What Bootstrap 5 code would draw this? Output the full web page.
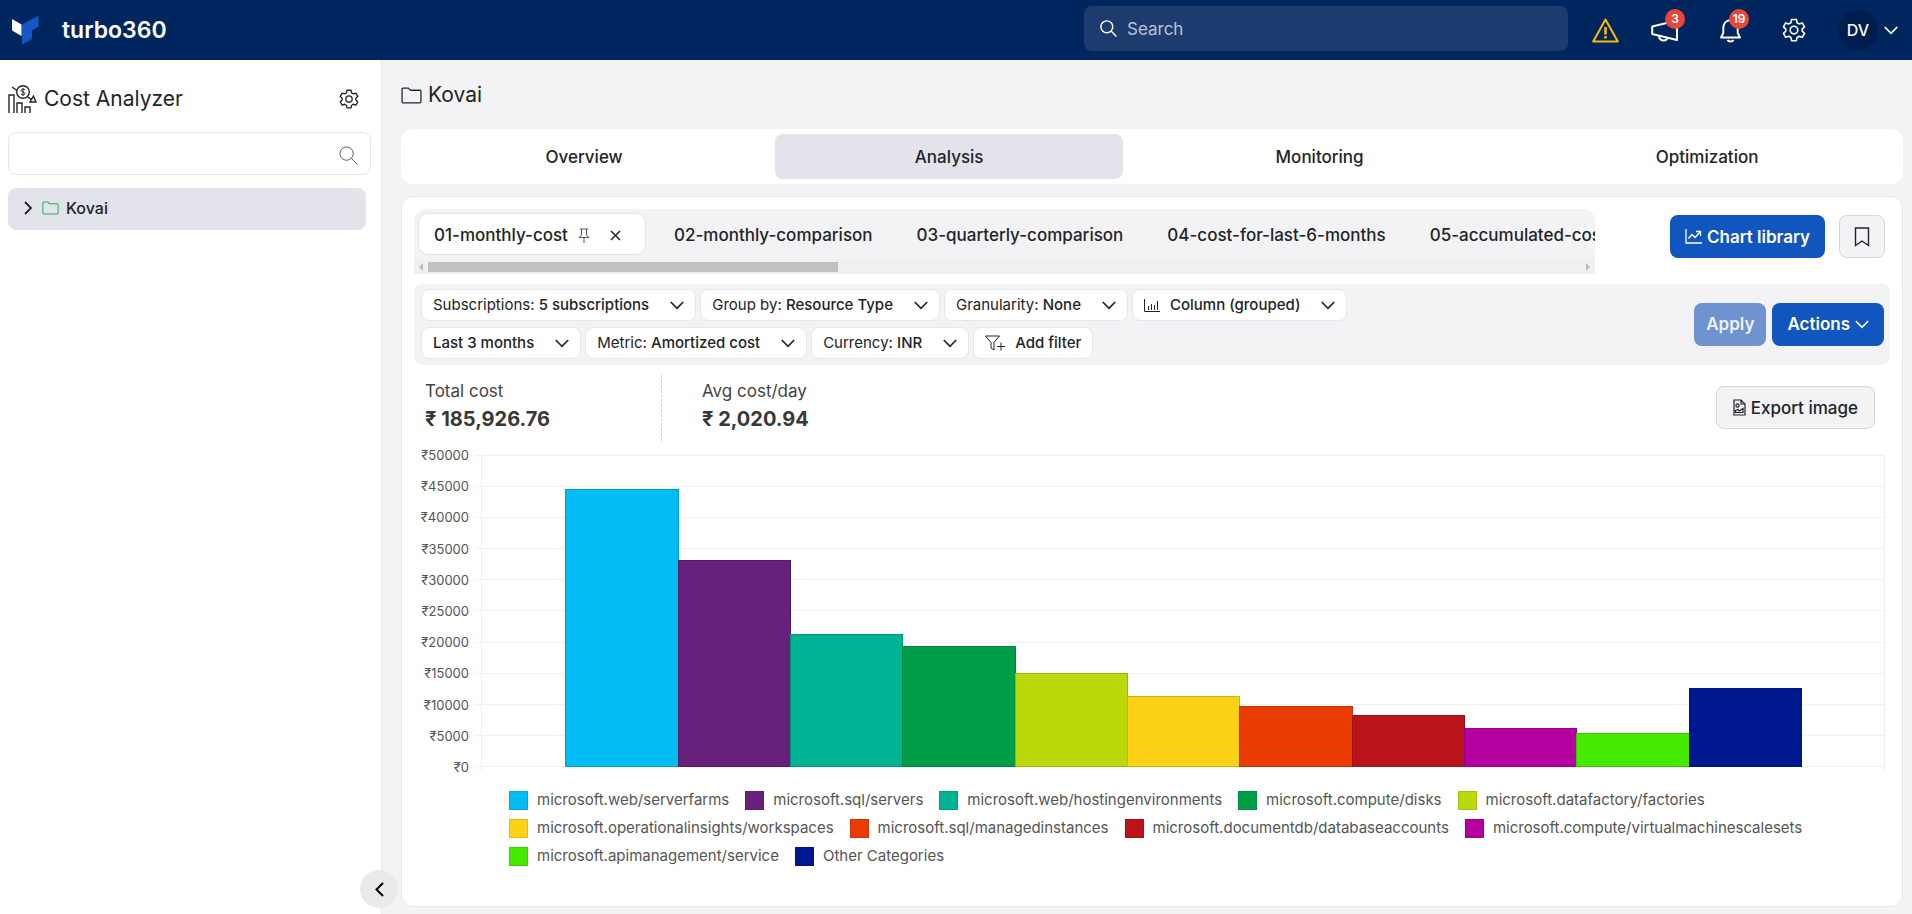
<!DOCTYPE html>
<html lang="en">
<head>
<meta charset="utf-8">
<meta name="viewport" content="width=device-width, initial-scale=1">
<title>Cost Analyzer - turbo360</title>
<link href="https://cdn.jsdelivr.net/npm/bootstrap@5.3.0/dist/css/bootstrap.min.css" rel="stylesheet">
<style>
:root { --navy: #00265f; --blue: #1155bf; --soft: #f3f3f6; --pill: #e3e3eb; --line: #e6e6ec; --ink: #222428; }
body { font-family: Inter, "Liberation Sans", sans-serif; font-size: 17px; line-height: 24px; color: var(--ink); background: var(--soft); }
svg { display: block; flex: none; fill: none; stroke: currentColor; }
ul { list-style: none; margin: 0; padding: 0; }

.topbar { height: 60px; background: var(--navy); color: #fff; padding: 0 14px 0 11px; }
.brand { font-size: 23px; font-weight: 600; color: #fff; gap: 22px; }
.brand svg { stroke: none; }
.global-search { width: 484px; height: 45px; background: #1c3c70; border-radius: 8px; padding: 0 16px; gap: 8px; margin: 0 24px 3px 0; }
.global-search input, .tree-search input { background: none; border: 0; outline: 0; min-width: 0; color: inherit; }
.global-search input::placeholder { color: #bcc4d1; opacity: 1; }
.tools { gap: 32px; }
.icon-btn { background: none; border: 0; padding: 0; color: inherit; position: relative; }
.warn-btn { color: #fcb900; }
.count { position: absolute; top: -8px; height: 20px; min-width: 20px; border-radius: 10px; background: #e8463a; color: #fff; font-size: 12px; font-weight: 600; line-height: 20px; text-align: center; }
.account { gap: 6px; }
.avatar { width: 40px; height: 40px; border-radius: 50%; background: #001d50; font-weight: 500; display: grid; place-items: center; font-size: 16px; }

.side { width: 382px; background: #fff; border-right: 1px solid var(--line); padding: 24px 10px 0 8px; position: relative; flex: none; }
.side-head { gap: 6px; padding-right: 12px; }
.side h1 { font-size: 21px; font-weight: 400; margin: 0; }
.tree-search { height: 43px; border: 1px solid var(--line); border-radius: 8px; padding: 4px 12px 0; margin-top: 18px; color: #555; }
.tree-item { height: 42px; background: var(--pill); border-radius: 8px; margin: 13px 5px 0 0; padding: 0 0 2px 16px; gap: 7px; color: var(--ink); text-decoration: none; font-size: 16px; font-weight: 500; }
.tree-folder { color: #27b060; margin-left: 3px; }
.collapse-btn { position: absolute; right: -17px; bottom: 6px; width: 38px; height: 38px; border-radius: 50%; background: #eaeaea; border: 0; display: grid; place-items: center; }

.content { padding: 21px 9px 7px 19px; min-width: 0; }
.crumb { font-size: 21px; line-height: 28px; gap: 6px; }
.main-tabs { background: #fff; border-radius: 12px; padding: 5px; gap: 13px; margin-top: 20px; }
.main-tabs a { flex: 1 1 auto; height: 45px; line-height: 47px; text-align: center; color: var(--ink); text-decoration: none; font-weight: 500; border-radius: 8px; }
.main-tabs a.active { background: var(--pill); }
.panel { background: #fff; border: 1px solid var(--line); border-radius: 12px; margin-top: 12px; padding: 12px 12px 0; }

.strip { background: var(--soft); border-radius: 12px 12px 0 0; flex: 0 1 1181px; min-width: 0; overflow: hidden; }
.strip-tabs { padding: 4px 4px 5px; white-space: nowrap; }
.strip-tabs a { color: var(--ink); text-decoration: none; font-weight: 500; height: 42px; padding: 2px 22px 0; }
.strip-tabs .on { background: #fff; border: 1px solid var(--pill); border-radius: 10px; height: 42px; width: 228px; padding: 2px 0 0 15px; margin-right: 6px; font-weight: 500; flex: none; }
.pin { color: #555; margin-left: 10px; margin-right: 20px; }
.scroller { height: 14px; background: #f0f0f0; gap: 5px; padding: 0 5px; }
.scroller .thumb { height: 10px; width: 35%; background: #c1c1c1; }
.scroller svg { fill: #bcbcbc; stroke: none; }

.act { height: 43px; border-radius: 8px; border: 1px solid transparent; display: flex; align-items: center; justify-content: center; gap: 5px; font-size: 17px; padding: 0 14px; }
.act-primary { background: var(--blue); color: #fff; font-weight: 600; }
.act-primary:disabled { background: #6f93cf; color: #edf2fa; opacity: 1; border-color: transparent; padding: 0 11px; }
.act-plain { background: var(--soft); border-color: #d6d6d8; color: var(--ink); font-weight: 500; }
.panel-actions { gap: 14px; padding: 6px 5px 0 0; }
.filter-actions { gap: 6px; }

.filters { background: var(--soft); border-radius: 8px; margin-top: 10px; padding: 5px 6px 6px 7px; }
.chips { gap: 6px 4px; max-width: 940px; }
.chip { height: 32px; background: #fff; border: 1px solid var(--line); border-radius: 8px; color: var(--ink); font-size: 15px; padding: 0 11px; display: flex; align-items: center; gap: 21px; white-space: nowrap; }
.chip b { font-weight: 500; }
.chip-lead { gap: 10px; }

.stats { padding: 10px 15px 0 11px; }
.stat-label { font-size: 17px; color: #444; line-height: 24px; }
.stat-value { font-size: 20px; font-weight: 700; color: #383838; line-height: 32px; }
.stat-first { width: 237px; height: 66px; border-right: 1px dashed #cfcfcf; }
.export { margin-top: 11px; padding: 0 16px; }

.chart { display: grid; grid-template-columns: 48px 6px 6px 1fr; margin: 14px 5px 0 7px; height: 317px; }
.y-labels { height: 312px; font-size: 13px; color: #555; }
.y-labels li { height: 0; display: flex; align-items: center; justify-content: flex-end; }
.grid-rows { grid-column: 3 / 5; grid-row: 1; height: 312px; border-bottom: 1px solid #f1f1f1; }
.grid-rows div { flex: 1; border-top: 1px solid #f1f1f1; }
.frame { grid-column: 4; grid-row: 1; border: solid #f1f1f1; border-width: 0 1px; }
.bars { grid-column: 4; grid-row: 1; height: 312px; padding: 0 6%; }
.bars div { flex: 1; border: 1px solid rgba(0,0,0,.16); margin-right: -1px; }

.legend-rows { margin: 18px 0 0 95px; font-size: 15px; line-height: 20px; color: #555; }
.legend-rows ul { gap: 0 16px; margin-bottom: 8px; }
.legend-rows li { display: flex; align-items: center; gap: 9px; white-space: nowrap; }
.swatch { width: 19px; height: 19px; border: 1px solid rgba(0,0,0,.1); }

.c1 { background: #03bcf4; } .c2 { background: #68217a; } .c3 { background: #00b294; } .c4 { background: #009e49; }
.c5 { background: #bad80a; } .c6 { background: #fdd116; } .c7 { background: #eb3c00; } .c8 { background: #ba141a; }
.c9 { background: #b4009e; } .c10 { background: #46ea00; } .c11 { background: #00188f; }
</style>
</head>
<body class="d-flex flex-column min-vh-100">

<svg width="0" height="0" class="position-absolute">
  <symbol id="gear" viewBox="0 0 24 24"><path stroke-width="1.6" stroke-linejoin="round" d="M9.600 1.500h4.800l.7 3.200 2 1.200 3.200-1 2.200 4-2.300 2.200v2l2.300 2.200-2.200 4-3.200-1-2 1.200-.7 3.200H9.600l-.7-3.200-2-1.200-3.200 1-2.200-4 2.300-2.200v-2L1.500 8.900l2.200-4 3.200 1 2-1.200z"/><circle cx="12" cy="12.100" r="3.800" stroke-width="1.600"/></symbol>
  <symbol id="down" viewBox="0 0 14 9"><path stroke-width="1.7" d="M.8 1 7 7.400 13.200 1"/></symbol>
  <symbol id="lens" viewBox="0 0 20 20"><circle cx="8" cy="8" r="7"/><path d="m13 13 6.300 6.300"/></symbol>
  <symbol id="folder" viewBox="0 0 20 16"><path stroke-width="1.200" d="M1 14V2q0-1 1-1h5l2 2h9q1 0 1 1v10q0 1-1 1H2q-1 0-1-1z"/></symbol>
</svg>

<header class="topbar d-flex align-items-center">
  <a href="#" class="brand d-flex align-items-center text-decoration-none me-auto">
    <svg width="29" height="30" viewBox="0 0 29 30"><path fill="#fff" d="M1 4 10.500 9.500v11.500L1 15.500z"/><path fill="#1557c4" d="M11 9.500 27.500.500v11L21 15.500V24L11 29.500z"/></svg>
    turbo360
  </a>
  <label class="global-search d-flex align-items-center">
    <svg width="17" height="17" stroke-width="1.700"><use href="#lens"/></svg>
    <input type="search" class="flex-grow-1" placeholder="Search" aria-label="Search">
  </label>
  <div class="tools d-flex align-items-center">
    <button type="button" class="icon-btn warn-btn" aria-label="Warnings">
      <svg width="27" height="25" viewBox="0 0 27 25"><path stroke-width="2" stroke-linejoin="round" d="M13.500 1.500 25.800 23.500H1.200z"/><path stroke-width="2.600" d="M13.500 9v7.500M13.500 18v2.500"/></svg>
    </button>
    <button type="button" class="icon-btn" aria-label="Announcements">
      <svg width="28" height="26" viewBox="0 0 28 26" stroke-width="2"><path d="M1.200 9.500v7.500L26 23V3.500z" stroke-linejoin="round"/><path d="M8 18.500c0 6 7.500 6.500 8.500 2"/></svg>
      <span class="count" style="left:14px">3</span>
    </button>
    <button type="button" class="icon-btn ms-2" aria-label="Notifications">
      <svg width="23" height="26" viewBox="0 0 23 26" stroke-width="1.900"><path stroke-linejoin="round" d="M2 20.500h19l-2.300-4.500V11c0-4-2.500-7.500-7.200-8-4.700.500-7.200 4-7.200 8v5z"/><path d="M8.500 23c1 2 5 2 6 0"/></svg>
      <span class="count" style="left:10px">19</span>
    </button>
    <button type="button" class="icon-btn ms-2" aria-label="Settings"><svg width="24" height="24"><use href="#gear"/></svg></button>
    <button type="button" class="icon-btn account d-flex align-items-center"><span class="avatar">DV</span><svg width="14" height="9"><use href="#down"/></svg></button>
  </div>
</header>

<div class="d-flex flex-grow-1">
  <aside class="side">
    <div class="side-head d-flex align-items-center">
      <svg width="30" height="30" viewBox="0 0 30 30" stroke-width="1.400"><path d="M1 29V11h5v18M9 29V19h5v10M17 29v-6h5v6M4 3l5 3.500M20 13l4 3M22 18h6l-2.500-6z"/><circle cx="15" cy="8" r="6.300"/><path d="M17 6c-1-1.300-4-1-4 .500s4 1.300 4 3-3 1.800-4 .400M15 4v8" stroke-width="1"/></svg>
      <h1 class="me-auto">Cost Analyzer</h1>
      <button type="button" class="icon-btn" aria-label="Cost Analyzer settings"><svg width="20" height="20"><use href="#gear"/></svg></button>
    </div>
    <label class="tree-search d-flex align-items-center">
      <input type="search" class="flex-grow-1" aria-label="Search cost groups">
      <svg width="19" height="19"><use href="#lens"/></svg>
    </label>
    <a href="#" class="tree-item d-flex align-items-center">
      <svg width="8" height="14" viewBox="0 0 8 14" stroke-width="1.800"><path d="m1 1 6 6-6 6"/></svg>
      <svg width="17" height="14" class="tree-folder"><use href="#folder"/></svg>
      Kovai
    </a>
    <button type="button" class="collapse-btn" aria-label="Collapse sidebar"><svg width="9" height="15" viewBox="0 0 9 15" stroke-width="2"><path d="M8 1 1.500 7.500 8 14"/></svg></button>
  </aside>

  <main class="content flex-grow-1 d-flex flex-column">
    <div class="crumb d-flex align-items-center">
      <svg width="21" height="17"><use href="#folder"/></svg>Kovai
    </div>

    <nav class="main-tabs d-flex">
      <a href="#">Overview</a><a href="#" class="active">Analysis</a><a href="#">Monitoring</a><a href="#">Optimization</a>
    </nav>

    <section class="panel flex-grow-1">
      <div class="d-flex align-items-start">
        <div class="strip me-auto">
          <div class="strip-tabs d-flex align-items-center">
            <div class="on d-flex align-items-center">
              01-monthly-cost
              <svg width="12" height="15" viewBox="0 0 12 15" class="pin"><path d="M2 1h8M3.500 1v6L1 9.500h10L8.500 7V1M6 9.500V15"/></svg>
              <button type="button" class="icon-btn" aria-label="Close tab"><svg width="11" height="11" viewBox="0 0 11 11" stroke-width="1.500"><path d="m1 1 9 9M10 1l-9 9"/></svg></button>
            </div>
            <a href="#" class="d-flex align-items-center">02-monthly-comparison</a>
            <a href="#" class="d-flex align-items-center">03-quarterly-comparison</a>
            <a href="#" class="d-flex align-items-center">04-cost-for-last-6-months</a>
            <a href="#" class="d-flex align-items-center">05-accumulated-costs</a>
          </div>
          <div class="scroller d-flex align-items-center">
            <svg width="4" height="8" viewBox="0 0 4 8"><path d="M4 0v8L0 4z"/></svg>
            <span class="thumb"></span>
            <svg width="4" height="8" viewBox="0 0 4 8" class="ms-auto"><path d="M0 0v8l4-4z"/></svg>
          </div>
        </div>
        <div class="panel-actions d-flex">
          <button type="button" class="act act-primary text-nowrap">
            <svg width="17" height="15" viewBox="0 0 17 15" stroke-width="1.300"><path d="M1 0v14h16M3.500 9.500 7 5.500l3 3L15 3M11 2.500h4.500V7"/></svg>Chart library
          </button>
          <button type="button" class="act act-plain" aria-label="Bookmark">
            <svg width="16" height="20" viewBox="0 0 16 20" stroke-width="1.400"><path d="M1.500 1h13v17.500L8 14l-6.500 4.500z"/></svg>
          </button>
        </div>
      </div>

      <div class="filters d-flex align-items-center">
        <div class="chips d-flex flex-wrap me-auto">
          <button type="button" class="chip"><span>Subscriptions: <b>5 subscriptions</b></span><svg width="14" height="9"><use href="#down"/></svg></button>
          <button type="button" class="chip"><span>Group by: <b>Resource Type</b></span><svg width="14" height="9"><use href="#down"/></svg></button>
          <button type="button" class="chip"><span>Granularity: <b>None</b></span><svg width="14" height="9"><use href="#down"/></svg></button>
          <button type="button" class="chip"><span class="chip-lead d-flex align-items-center"><svg width="16" height="13" viewBox="0 0 16 13"><path d="M.5 0v12.500H16M4.500 11V7M7.500 11V5M10.500 11V6M13.500 11V2"/></svg><b>Column (grouped)</b></span><svg width="14" height="9"><use href="#down"/></svg></button>
          <button type="button" class="chip"><b>Last 3 months</b><svg width="14" height="9"><use href="#down"/></svg></button>
          <button type="button" class="chip"><span>Metric: <b>Amortized cost</b></span><svg width="14" height="9"><use href="#down"/></svg></button>
          <button type="button" class="chip"><span>Currency: <b>INR</b></span><svg width="14" height="9"><use href="#down"/></svg></button>
          <button type="button" class="chip"><span class="chip-lead d-flex align-items-center"><svg width="20" height="16" viewBox="0 0 20 16"><path d="M.5 1h14L9 7.500V15l-3-2V7.500zM12 11.500h8M16 7.500v8"/></svg><b>Add filter</b></span></button>
        </div>
        <div class="filter-actions d-flex">
          <button type="button" class="act act-primary" disabled>Apply</button>
          <button type="button" class="act act-primary">Actions <svg width="14" height="9"><use href="#down"/></svg></button>
        </div>
      </div>

      <div class="stats d-flex align-items-start">
        <div class="stat-first">
          <div class="stat-label mt-1">Total cost</div>
          <div class="stat-value">₹ 185,926.76</div>
        </div>
        <div class="ms-4 ps-3 me-auto">
          <div class="stat-label mt-1">Avg cost/day</div>
          <div class="stat-value">₹ 2,020.94</div>
        </div>
        <button type="button" class="act act-plain export">
          <svg width="13" height="17" viewBox="0 0 13 17" stroke-width="1.200"><path d="M1 1h7l4 4v11H1zM8 1v4h4M2.500 13.500v-2l2.500-1 1.500 1.500 3.500-2.500v4z"/><circle cx="4.500" cy="6.500" r="1.600"/></svg>Export image
        </button>
      </div>

      <div class="chart" role="img" aria-label="Cost by resource type over the last 3 months">
        <ul class="y-labels d-flex flex-column justify-content-between">
          <li>₹50000</li><li>₹45000</li><li>₹40000</li><li>₹35000</li><li>₹30000</li><li>₹25000</li><li>₹20000</li><li>₹15000</li><li>₹10000</li><li>₹5000</li><li>₹0</li>
        </ul>
        <div class="grid-rows d-flex flex-column"><div></div><div></div><div></div><div></div><div></div><div></div><div></div><div></div><div></div><div></div></div>
        <div class="frame"></div>
        <div class="bars d-flex align-items-end">
          <div class="c1" style="height:89.2%"></div>
          <div class="c2" style="height:66.3%"></div>
          <div class="c3" style="height:42.5%"></div>
          <div class="c4" style="height:38.9%"></div>
          <div class="c5" style="height:30%"></div>
          <div class="c6" style="height:22.7%"></div>
          <div class="c7" style="height:19.5%"></div>
          <div class="c8" style="height:16.8%"></div>
          <div class="c9" style="height:12.4%"></div>
          <div class="c10" style="height:10.8%"></div>
          <div class="c11" style="height:25.3%"></div>
        </div>
      </div>

      <div class="legend-rows">
        <ul class="d-flex flex-wrap">
          <li><span class="swatch c1"></span>microsoft.web/serverfarms</li>
          <li><span class="swatch c2"></span>microsoft.sql/servers</li>
          <li><span class="swatch c3"></span>microsoft.web/hostingenvironments</li>
          <li><span class="swatch c4"></span>microsoft.compute/disks</li>
          <li><span class="swatch c5"></span>microsoft.datafactory/factories</li>
        </ul>
        <ul class="d-flex flex-wrap">
          <li><span class="swatch c6"></span>microsoft.operationalinsights/workspaces</li>
          <li><span class="swatch c7"></span>microsoft.sql/managedinstances</li>
          <li><span class="swatch c8"></span>microsoft.documentdb/databaseaccounts</li>
          <li><span class="swatch c9"></span>microsoft.compute/virtualmachinescalesets</li>
        </ul>
        <ul class="d-flex flex-wrap">
          <li><span class="swatch c10"></span>microsoft.apimanagement/service</li>
          <li><span class="swatch c11"></span>Other Categories</li>
        </ul>
      </div>
    </section>
  </main>
</div>

<script src="https://cdn.jsdelivr.net/npm/bootstrap@5.3.0/dist/js/bootstrap.bundle.min.js"></script>
</body>
</html>
